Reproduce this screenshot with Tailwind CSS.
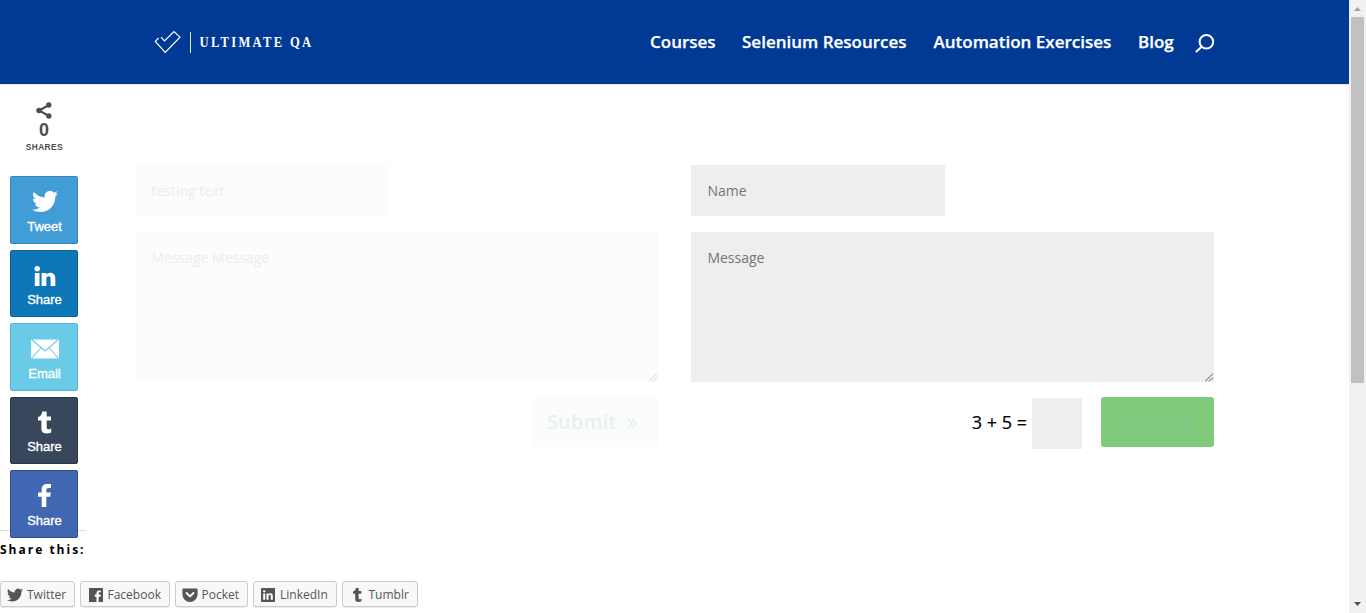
<!DOCTYPE html>
<html lang="en">
<head>
<meta charset="utf-8">
<title>Ultimate QA</title>
<script src="https://cdn.jsdelivr.net/npm/@tailwindcss/browser@4"></script>
</head>
<body class="bg-white overflow-hidden">
<svg class="hidden" aria-hidden="true">
  <symbol id="bird" viewBox="0 0 24 24"><path d="M23.95 4.57a10 10 0 0 1-2.82.77 4.96 4.96 0 0 0 2.16-2.72 9.9 9.9 0 0 1-3.12 1.19 4.92 4.92 0 0 0-8.38 4.48A13.9 13.9 0 0 1 1.64 3.16a4.93 4.93 0 0 0 1.52 6.57 4.9 4.9 0 0 1-2.23-.61v.06a4.92 4.92 0 0 0 3.95 4.83 5 5 0 0 1-2.21.08 4.94 4.94 0 0 0 4.6 3.42A9.87 9.87 0 0 1 0 19.54a13.99 13.99 0 0 0 7.55 2.21c9.05 0 14-7.5 14-13.98l-.02-.64a9.94 9.94 0 0 0 2.42-2.56z"/></symbol>
  <symbol id="tum" viewBox="0 0 14 22"><path d="M4.300 0H8.700v4.900H13v4.200H8.700v6.100c0 1.900.7 2.500 2.100 2.500 1 0 1.500-.3 2.400-.7V21c-1.400.7-2.900 1-4.700 1C4.700 22 3.400 20 3.400 16.800V9.100H0V5.600C2.500 4.900 3.900 3.200 4.300 0z"/></symbol>
</svg>
<div class="flex h-[613px] w-[1366px] font-['Open_Sans',sans-serif]">
  <div class="relative flex h-full w-[1349px] flex-col">
    <header class="flex h-[84px] shrink-0 items-center justify-between bg-[#003a94] pr-[134px] pl-[154px] shadow-[0_1px_0_rgba(0,0,0,0.1)]">
      <div class="flex items-center">
        <svg class="h-6 w-7" viewBox="0 0 28 24" fill="none" stroke="#fff" stroke-width="1.150"><path d="M4.500 8 1.300 11.500 11.200 22.300 26 7.200 20 1.500 10.500 11 7 7.200"/></svg>
        <div class="ml-2 h-[21px] w-px bg-[#dfe6f2]"></div>
        <svg class="ml-2 h-6 w-[115px]" viewBox="0 0 115 24"><text transform="translate(0.500 17) scale(.84 1)" x="0" y="0" textLength="133" fill="#fff" font-family="Liberation Serif, serif" font-weight="700" font-size="15">ULTIMATE QA</text></svg>
      </div>
      <nav class="flex items-center text-[17px] leading-[24px] font-semibold whitespace-nowrap text-white [-webkit-text-stroke:0.250px_white]">
        <a class="w-[92px]">Courses</a>
        <a class="w-[191.500px]">Selenium Resources</a>
        <a class="w-[204.500px]">Automation Exercises</a>
        <a class="w-[57px]">Blog</a>
        <svg class="mt-[3px] h-5 w-5" viewBox="0 0 20 20" fill="none" stroke="#fff" stroke-width="2"><circle cx="11.400" cy="7.800" r="6.800"/><path d="M6.800 12.600 1.500 17.600" stroke-linecap="round"/></svg>
      </nav>
    </header>

    <main class="flex h-[446px] shrink-0 gap-[33px] pt-[81px] pl-[135px] text-[14px] leading-5">
      <form class="w-[523px]">
        <div class="flex h-[51px] w-[254px] items-center bg-[#fcfcfc] pl-[16.400px] text-[#ececec]">testing text</div>
        <div class="relative mt-4 h-[150px] bg-[#fcfcfc] pt-4 pl-[16.400px] text-[#ececec]">Message Message
          <svg class="absolute right-0 bottom-0 h-[9px] w-[9px]" viewBox="0 0 9 9" stroke="#c8c8c8" stroke-width=".8"><path d="M0 8.500 8 .500M4 8.500 8 4.500"/></svg>
        </div>
        <div class="mt-[15px] ml-auto flex h-[50px] w-[126px] items-center rounded-[3px] bg-[#fcfcfc] pl-[15px] text-[20px] font-semibold text-[#e5f4e9]">
          <span class="tracking-[0.1px]">Submit</span>
          <svg class="mt-[2px] ml-[11px] h-[11px] w-[11px]" viewBox="0 0 11 12" fill="none" stroke="#e0f2e5" stroke-width="1.700"><path d="M1 1 5.200 6 1 11M5.500 1 9.700 6 5.500 11"/></svg>
        </div>
      </form>
      <form class="w-[523px]">
        <div class="flex h-[51px] w-[254px] items-center bg-[#eee] pl-[16.400px] text-[#757575]">Name</div>
        <div class="relative mt-4 h-[150px] bg-[#eee] pt-4 pl-[16.400px] text-[#757575]">Message
          <svg class="absolute right-0 bottom-0 h-[9px] w-[9px]" viewBox="0 0 9 9" stroke="#333" stroke-width=".8"><path d="M0 8.500 8 .500M4 8.500 8 4.500"/></svg>
        </div>
        <div class="mt-[15px] flex h-[52px] justify-end">
          <span class="mt-[15px] mr-[5px] text-[18px] whitespace-nowrap text-black [-webkit-text-stroke:0.200px_black]">3 + 5 =</span>
          <div class="mt-px h-[51px] w-[50px] bg-[#eee]"></div>
          <div class="ml-[19px] flex h-[50px] w-[113px] items-center justify-center rounded-[3px] bg-[#80cb7b] text-[20px] font-semibold text-[#80c68d]">Submit</div>
        </div>
      </form>
    </main>

    <section class="flex flex-col">
      <h3 class="h-[51px] w-[86px] border-t border-[#ddd] pt-[9px] text-[12px] leading-5 font-bold tracking-[2px] whitespace-nowrap text-black">Share this:</h3>
      <ul class="flex gap-[5px] text-[12px] leading-[24px] text-[#555]">
        <li class="flex h-[26px] w-[75px] items-center rounded-[3px] border border-[#ccc] bg-[#f8f8f8] pt-px pl-[6px] shadow-[0_1px_0_rgba(0,0,0,0.08)]"><svg class="mr-1 h-4 w-4 fill-[#555]"><use href="#bird"/></svg>Twitter</li>
        <li class="flex h-[26px] w-[90px] items-center rounded-[3px] border border-[#ccc] bg-[#f8f8f8] pt-px pl-[7.500px] shadow-[0_1px_0_rgba(0,0,0,0.08)]"><svg class="mr-[5px] h-[14px] w-[14px]" viewBox="0 0 14 14"><rect width="14" height="14" rx=".6" fill="#555"/><path d="M7.500 14V8.700H5.800V6.600h1.700V5.200c0-1.800 1-2.800 2.700-2.800h1.600v1.900h-1c-.9 0-1.200.4-1.200 1.100v1.200h2.200l-.3 2.100H9.600V14z" fill="#fff"/></svg>Facebook</li>
        <li class="flex h-[26px] w-[73px] items-center rounded-[3px] border border-[#ccc] bg-[#f8f8f8] pt-px pl-[5.500px] shadow-[0_1px_0_rgba(0,0,0,0.08)]"><svg class="mr-1 h-[14px] w-[16px]" viewBox="0 0 16 14"><path d="M1.700.5h12.600c.8 0 1.300.5 1.300 1.300v4.500a7.600 7.600 0 0 1-15.200 0V1.800C.4 1 .9.5 1.700.5z" fill="#555"/><path d="M4.500 5 8 8.400 11.500 5" fill="none" stroke="#fff" stroke-width="1.900" stroke-linecap="round" stroke-linejoin="round"/></svg>Pocket</li>
        <li class="flex h-[26px] w-[84px] items-center rounded-[3px] border border-[#ccc] bg-[#f8f8f8] pt-px pl-[7px] shadow-[0_1px_0_rgba(0,0,0,0.08)]"><svg class="mr-[5px] h-[14px] w-[14px]" viewBox="0 0 14 14"><rect width="14" height="14" rx=".8" fill="#555"/><path d="M2.200 5.400h2v6.400h-2zM5.500 5.400h1.900v.9c.4-.7 1.100-1.100 2-1.100 1.900 0 2.400 1.200 2.400 3v3.600h-2V8.500c0-1 -.1-1.700-1.100-1.700s-1.200.8-1.200 1.700v3.300h-2z" fill="#fff"/><circle cx="3.200" cy="3.300" r="1.150" fill="#fff"/></svg>LinkedIn</li>
        <li class="flex h-[26px] w-[76px] items-center rounded-[3px] border border-[#ccc] bg-[#f8f8f8] pt-px pl-[9.500px] shadow-[0_1px_0_rgba(0,0,0,0.08)]"><svg class="mr-[7px] h-[14px] w-[9px] fill-[#555]"><use href="#tum"/></svg>Tumblr</li>
      </ul>
    </section>

    <aside class="absolute top-[102px] left-[10px] flex w-[68px] flex-col font-['Liberation_Sans',sans-serif] text-[13px] leading-4 text-white">
      <div class="flex h-[74px] flex-col items-center text-[#4a4d51]">
        <svg class="h-[17px] w-[16px]" viewBox="0 0 16 17" fill="#4a4d51"><path d="M13 3 3 8.500 13 14" fill="none" stroke="#4a4d51" stroke-width="2.100"/><circle cx="12.800" cy="3" r="2.700"/><circle cx="3" cy="8.500" r="2.700"/><circle cx="12.800" cy="14" r="2.700"/></svg>
        <div class="mt-px h-[18px] text-[18px] leading-[20px] font-bold">0</div>
        <svg class="mt-[2px] h-3 w-[38px]" viewBox="0 0 38 12"><text transform="translate(.7 9.500) scale(.88 1)" textLength="42" font-size="9.500" font-weight="700" fill="#4a4d51">SHARES</text></svg>
      </div>
      <div class="flex flex-col [&>div]:flex [&>div]:flex-col [&>div]:items-center [&>div]:rounded-[2px] [&>div]:border [&>div]:pl-px [&_span]:[-webkit-text-stroke:0.350px_white]">
        <div class="mb-[6px] h-[68px] border-[#3585b8] bg-[#429cd6]"><svg class="mt-[11px] h-[27px] w-[26px] fill-white"><use href="#bird"/></svg><span class="mt-[4px]">Tweet</span></div>
        <div class="mb-[6px] h-[67px] border-[#0c659a] bg-[#0d77b7]"><svg class="mt-[14px] h-[22px] w-[22px]" viewBox="0 0 22 22" fill="#fff"><path d="M.800 8h4.700v13H.800zM7.600 8h4.400v1.800c.8-1.400 2.100-2.100 4-2.100 3.900 0 5.300 2.300 5.300 6.100V21h-4.700v-6.500c0-2-.2-3.200-2-3.200s-2.300 1.300-2.300 3.200V21H7.600z"/><circle cx="3.200" cy="3.700" r="2.700"/></svg><span class="mt-[4.500px]">Share</span></div>
        <div class="mb-[6px] h-[68px] border-[#59b4cf] bg-[#6acbe9]"><svg class="mt-[15px] h-[20px] w-[28px]" viewBox="0 0 28 20"><path d="M0 .500h28v19H0z" fill="#fff"/><path d="M.5.500 14 12 27.500.500M.5 19.500 9.700 9M27.500 19.500 18.300 9" fill="none" stroke="#6acbe9" stroke-width="1.100"/></svg><span class="mt-[7px]">Email</span></div>
        <div class="mb-[6px] h-[67px] border-[#28374a] bg-[#39475d]"><svg class="mt-[13px] h-[23px] w-[14px] fill-white"><use href="#tum"/></svg><span class="mt-[5px]">Share</span></div>
        <div class="h-[68px] border-[#32508e] bg-[#4267b2]"><svg class="mt-[13px] h-[23px] w-[13px]" viewBox="0 0 13 23"><path d="M3.700 23V12.700H0V8.600h3.700V5.500C3.700 1.900 5.800 0 9.200 0H13v3.900h-2.300C8.900 3.900 8.300 4.800 8.300 6.500v2.100h4.600l-.7 4.100H8.300V23z" fill="#fff"/></svg><span class="mt-[6px]">Share</span></div>
      </div>
    </aside>
  </div>
  <div class="flex h-full w-[17px] flex-col items-center bg-[#f1f1f1]">
    <svg class="h-[17px] w-[17px]" viewBox="0 0 17 17"><path d="M5 11h7L8.500 7z" fill="#a3a3a3"/></svg>
    <div class="h-[366px] w-[13px] bg-[#c1c1c1]"></div>
    <svg class="mt-auto h-[17px] w-[17px]" viewBox="0 0 17 17"><path d="M5 6h7L8.500 10z" fill="#505050"/></svg>
  </div>
</div>
</body>
</html>
